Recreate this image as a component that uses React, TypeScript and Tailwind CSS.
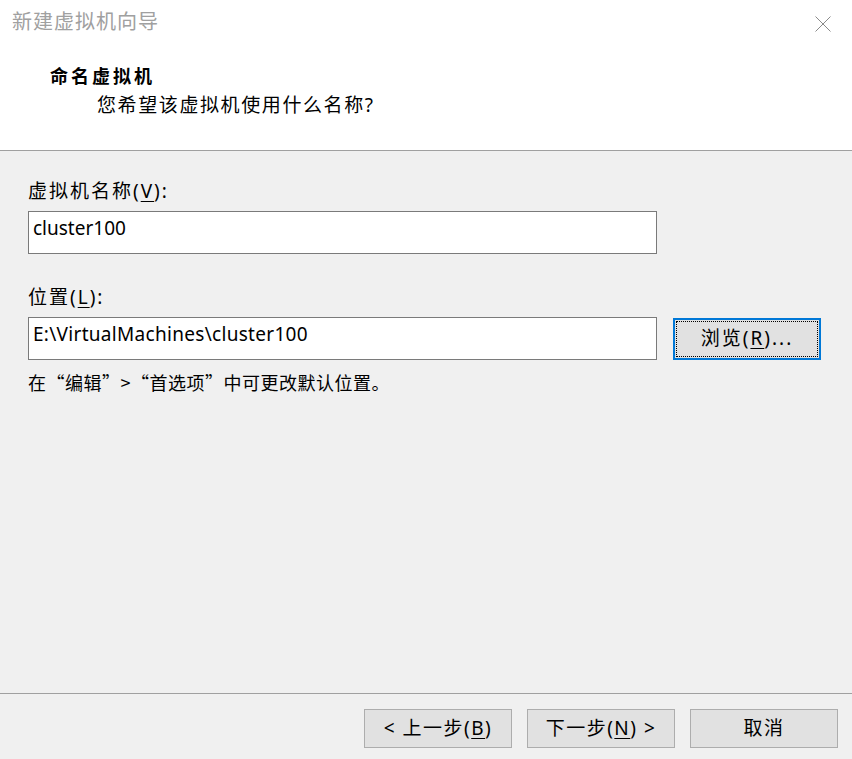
import React from "react";

const FONT = "font-['Noto_Sans','Noto_Sans_CJK_SC',sans-serif]";
const CJK = "font-['Noto_Sans_CJK_SC',sans-serif]";

function Key({ children }: { children: React.ReactNode }) {
  return <span className="underline underline-offset-[3px]">{children}</span>;
}

function FooterButton({ children }: { children: React.ReactNode }) {
  return (
    <button
      type="button"
      className="w-[148px] h-[39px] bg-[#e1e1e1] border border-[#adadad] text-[19px] leading-none tracking-[1.5px] text-black flex items-center justify-center"
    >
      {children}
    </button>
  );
}

export default function App() {
  return (
    <div className={`${FONT} w-[852px] h-[759px] bg-[#f0f0f0] flex flex-col text-black overflow-hidden`}>
      {/* header */}
      <header className="h-[151px] shrink-0 bg-white border-b border-[#a0a0a0] flex flex-col">
        <div className="flex items-start justify-between pt-[8px] pl-[12px] pr-[21px]">
          <span className="text-[20px] leading-[28px] tracking-[1px] text-[#a0a0a0]">新建虚拟机向导</span>
          <svg width="16" height="16" viewBox="0 0 16 16" className="mt-[8px]" aria-hidden="true">
            <path d="M0.5 0.5 15.5 15.5M15.5 0.5 0.5 15.5" stroke="#8a8a8a" strokeWidth="1" />
          </svg>
        </div>
        <div className="pl-[50px] mt-[27px] text-[18px] leading-[26px] font-bold tracking-[3px]">命名虚拟机</div>
        <div className="pl-[97px] mt-[3px] text-[19px] leading-[26px] tracking-[1.6px]">
          您希望该虚拟机使用什么名称?
        </div>
      </header>

      {/* body */}
      <main className="flex-1 px-[28px] pt-[27px] flex flex-col">
        <label className="text-[19px] leading-[26px] tracking-[2px]">
          虚拟机名称(<Key>V</Key>):
        </label>
        <div className="mt-[7px] w-[629px] h-[43px] bg-white border border-[#7a7a7a] pl-[4px] pt-[3px] text-[19px] leading-[26px]">
          cluster100
        </div>

        <label className="mt-[30px] text-[19px] leading-[26px] tracking-[2px]">
          位置(<Key>L</Key>):
        </label>
        <div className="mt-[7px] flex items-center gap-[16px]">
          <div className="w-[629px] h-[43px] bg-white border border-[#7a7a7a] pl-[4px] pt-[3px] text-[19px] leading-[26px] tracking-[0.3px]">
            E:\VirtualMachines\cluster100
          </div>
          <button
            type="button"
            className="w-[148px] h-[42px] bg-[#e1e1e1] border-2 border-[#0078d7] p-[1px]"
          >
            <span className="w-full h-full border border-dotted border-black flex items-center justify-center text-[19px] leading-none tracking-[2px]">
              浏览(<Key>R</Key>)...
            </span>
          </button>
        </div>
        <p className={`${CJK} mt-[9px] text-[18px] leading-[26px] tracking-[0.5px]`}>
          在“编辑”&gt;“首选项”中可更改默认位置。
        </p>
      </main>

      {/* footer */}
      <footer className="h-[66px] shrink-0 border-t border-[#a0a0a0] flex items-start justify-end gap-[15px] pt-[15px] pr-[14px]">
        <FooterButton>
          &lt;&nbsp;上一步(<Key>B</Key>)
        </FooterButton>
        <FooterButton>
          下一步(<Key>N</Key>)&nbsp;&gt;
        </FooterButton>
        <FooterButton>取消</FooterButton>
      </footer>
    </div>
  );
}
